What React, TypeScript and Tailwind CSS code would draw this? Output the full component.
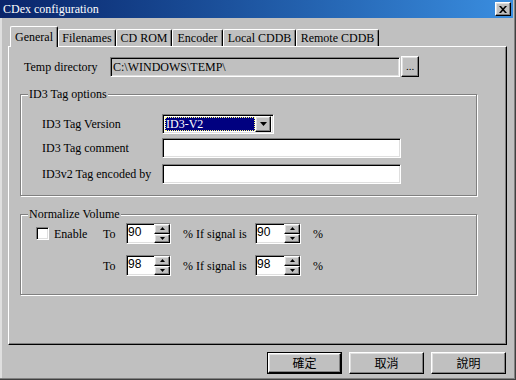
import React from 'react';

const sunken =
  'border border-t-[#808080] border-l-[#808080] border-b-white border-r-white shadow-[inset_1px_1px_0_#000,inset_-1px_-1px_0_#dfdfdf]';
const raised =
  'border border-t-white border-l-white border-b-black border-r-black shadow-[inset_-1px_-1px_0_#808080,inset_1px_1px_0_#dfdfdf] bg-[#c0c0c0]';

const tabs = [
  { label: 'General', w: 'w-[48px]' },
  { label: 'Filenames', w: 'w-[58px]' },
  { label: 'CD ROM', w: 'w-[56px]' },
  { label: 'Encoder', w: 'w-[51px]' },
  { label: 'Local CDDB', w: 'w-[73px]' },
  { label: 'Remote CDDB', w: 'w-[83px]' },
];

const Spin: React.FC<{ value: string; w: string }> = ({ value, w }) => (
  <div className={`${sunken} ${w} h-[21px] flex bg-white`}>
    <div className="flex-1 pl-[1px] pt-[1px] font-['Liberation_Sans',sans-serif] text-[12px] leading-[14px]">
      {value}
    </div>
    <div className="w-[16px] flex flex-col">
      <div className={`${raised} flex-1 flex items-center justify-center`}>
        <svg width="5" height="3" viewBox="0 0 5 3">
          <path d="M2.5 0L5 3H0z" fill="#000" />
        </svg>
      </div>
      <div className={`${raised} flex-1 flex items-center justify-center`}>
        <svg width="5" height="3" viewBox="0 0 5 3">
          <path d="M0 0h5L2.5 3z" fill="#000" />
        </svg>
      </div>
    </div>
  </div>
);

const Group: React.FC<{ title: string; h: string; children: React.ReactNode }> = ({ title, h, children }) => (
  <div className={`relative ml-[11px] w-[457px] ${h} border border-[#808080] shadow-[inset_1px_1px_0_#fff,1px_1px_0_#fff]`}>
    <span className="absolute left-[7px] -top-[8px] px-[1px] bg-[#c0c0c0] text-[12px] leading-[14px]">{title}</span>
    {children}
  </div>
);

const App: React.FC = () => {
  return (
    <div className="w-[516px] h-[380px] bg-[#c0c0c0] flex flex-col overflow-hidden font-['Liberation_Serif',serif] text-black shadow-[inset_-1px_-1px_0_#404040,inset_-2px_-2px_0_#808080,inset_2px_0_0_#dfdfdf]">
      {/* Title bar */}
      <div className="h-[18px] mr-[3px] flex items-center justify-between bg-gradient-to-r from-[#0a246a] to-[#3a8ee0]">
        <span className="pl-[3px] text-white text-[12px] leading-[14px]">CDex configuration</span>
        <div className={`${raised} w-[16px] h-[14px] mr-[2px] flex items-center justify-center`}>
          <svg width="8" height="7" viewBox="0 0 8 7">
            <path d="M0 0h2l2 2.3L6 0h2L5 3.5 8 7H6L4 4.7 2 7H0l3-3.5z" fill="#000" />
          </svg>
        </div>
      </div>

      {/* Tabs */}
      <div className="mt-[7px] h-[21px] pl-[10px] flex items-end">
        {tabs.map((t, i) =>
          i === 0 ? (
            <div
              key={t.label}
              className={`${t.w} h-[21px] -mb-[1px] relative z-10 bg-[#c0c0c0] border-t border-l border-r border-t-white border-l-white border-r-black shadow-[inset_-1px_0_0_#808080] rounded-t-[2px] flex justify-center pt-[3px] text-[12px] leading-[14px]`}
            >
              {t.label}
            </div>
          ) : (
            <div
              key={t.label}
              className={`${t.w} h-[17px] border-t border-l border-r border-t-white border-l-white border-r-black shadow-[inset_-1px_0_0_#808080] rounded-t-[2px] flex justify-center pt-[1px] text-[12px] leading-[14px]`}
            >
              {t.label}
            </div>
          )
        )}
      </div>

      {/* Panel */}
      <div className="ml-[8px] w-[499px] h-[299px] border border-t-white border-l-white border-r-black border-b-black shadow-[inset_-1px_-1px_0_#808080] flex flex-col">
        <div className="mt-[9px] h-[21px] pl-[15px] flex items-center">
          <span className="w-[86px] text-[12px] leading-[14px]">Temp directory</span>
          <div className={`${sunken} w-[290px] h-[20px] pl-[2px] pt-[2px] text-[12px] leading-[14px]`}>
            C:\WINDOWS\TEMP\
          </div>
          <div className={`${raised} ml-[1px] w-[18px] h-[21px] flex items-center justify-center text-[11px] leading-[11px]`}>
            ...
          </div>
        </div>

        <div className="mt-[17px]">
          <Group title="ID3 Tag options" h="h-[102px]">
            <div className="pt-[19px] pl-[21px] flex flex-col text-[12px] leading-[14px]">
              <div className="h-[20px] flex items-center">
                <span className="w-[120px]">ID3 Tag Version</span>
                <div className={`${sunken} w-[112px] h-[20px] bg-white flex items-center p-[2px]`}>
                  <div className="flex-1 h-full bg-[#000080] text-white outline-1 outline-dotted outline-offset-[-1px] outline-[#ffff80] pl-[1px]">
                    ID3-V2
                  </div>
                  <div className={`${raised} w-[16px] h-[16px] flex items-center justify-center`}>
                    <svg width="7" height="4" viewBox="0 0 7 4">
                      <path d="M0 0h7L3.5 4z" fill="#000" />
                    </svg>
                  </div>
                </div>
              </div>
              <div className="mt-[4px] h-[20px] flex items-center">
                <span className="w-[120px]">ID3 Tag comment</span>
                <div className={`${sunken} w-[239px] h-[20px] bg-white`} />
              </div>
              <div className="mt-[6px] h-[20px] flex items-center">
                <span className="w-[120px]">ID3v2 Tag encoded by</span>
                <div className={`${sunken} w-[239px] h-[20px] bg-white`} />
              </div>
            </div>
          </Group>
        </div>

        <div className="mt-[18px]">
          <Group title="Normalize Volume" h="h-[81px]">
            <div className="pt-[8px] pl-[15px] flex flex-col text-[12px] leading-[14px]">
              <div className="h-[21px] flex items-center">
                <div className="w-[67px] flex items-center">
                  <div className={`${sunken} w-[13px] h-[13px] bg-white`} />
                  <span className="ml-[5px]">Enable</span>
                </div>
                <span className="w-[23px]">To</span>
                <Spin value="90" w="w-[45px]" />
                <span className="ml-[12px] w-[72px]">% If signal is</span>
                <Spin value="90" w="w-[46px]" />
                <span className="ml-[12px]">%</span>
              </div>
              <div className="mt-[11px] h-[21px] flex items-center">
                <div className="w-[67px]" />
                <span className="w-[23px]">To</span>
                <Spin value="98" w="w-[45px]" />
                <span className="ml-[12px] w-[72px]">% If signal is</span>
                <Spin value="98" w="w-[46px]" />
                <span className="ml-[12px]">%</span>
              </div>
            </div>
          </Group>
        </div>
      </div>

      {/* Buttons */}
      <div className="mt-[7px] pr-[10px] flex justify-end gap-[7px] font-['Noto_Sans_CJK_TC','Noto_Sans_CJK_SC',sans-serif] text-[12px] leading-[14px]">
        <div className="border border-black">
          <div className={`${raised} w-[73px] h-[20px] flex items-center justify-center`}>確定</div>
        </div>
        <div className={`${raised} w-[75px] h-[22px] flex items-center justify-center`}>取消</div>
        <div className={`${raised} w-[75px] h-[22px] flex items-center justify-center`}>說明</div>
      </div>
    </div>
  );
};

export default App;
